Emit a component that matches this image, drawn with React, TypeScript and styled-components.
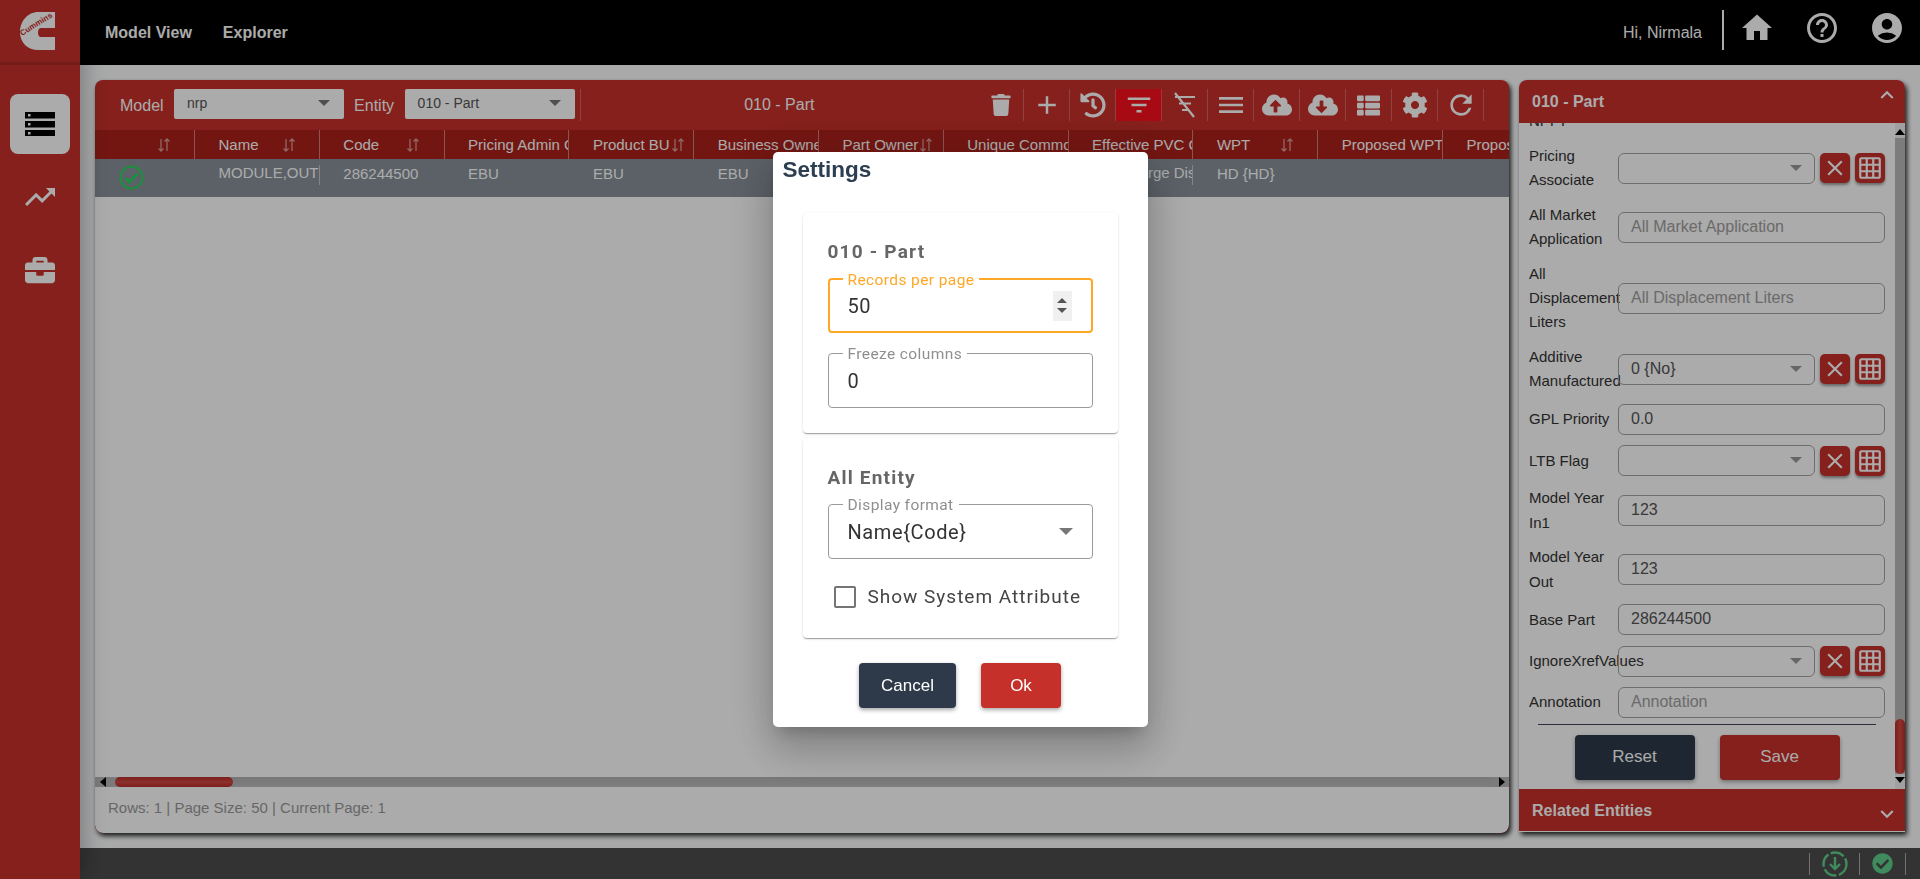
import React from "react";
import styled, { createGlobalStyle } from "styled-components";
import { MdHome, MdHelpOutline, MdAccountCircle, MdTrendingUp, MdAdd, MdFilterList, MdMenu, MdRefresh, MdClose, MdGridOn, MdKeyboardArrowUp, MdKeyboardArrowDown } from "react-icons/md";
import { FaBriefcase, FaTrash, FaHistory, FaCloudUploadAlt, FaCloudDownloadAlt, FaThList, FaCog, FaCheckCircle } from "react-icons/fa";

const GlobalStyle = createGlobalStyle`
  html, body { margin: 0; padding: 0; height: 100%; overflow: hidden; }
  body { font-family: "Liberation Sans", Arial, sans-serif; background: #fcfdfe; }
  * { box-sizing: border-box; }
`;

const RED = "#c6302a";

const Shell = styled.div`
  display: flex;
  width: 1920px;
  height: 879px;
`;

const Sidebar = styled.aside`
  width: 80px;
  flex: none;
  background: ${RED};
  box-shadow: 4px 0 22px rgba(0, 0, 0, 0.28);
  z-index: 2;
  display: flex;
  flex-direction: column;
  align-items: center;
`;

const LogoCell = styled.div`
  width: 100%;
  height: 65px;
  flex: none;
  border-bottom: 3px solid #ac2a25;
  display: flex;
  align-items: flex-start;
  padding: 12px 0 0 20px;
`;

const NavButton = styled.div<{ $active?: boolean; $height: number }>`
  width: 60px;
  height: ${(p) => p.$height}px;
  border-radius: 8px;
  background: ${(p) => (p.$active ? "#fff" : "transparent")};
  color: #fff;
  display: flex;
  align-items: center;
  justify-content: center;
`;

const NavList = styled.nav`
  display: flex;
  flex-direction: column;
  align-items: center;
  gap: 13px;
  padding-top: 29px;
`;

const Main = styled.div`
  flex: 1;
  min-width: 0;
  display: flex;
  flex-direction: column;
`;

const TopBar = styled.header`
  height: 65px;
  flex: none;
  background: #000;
  color: #fff;
  display: flex;
  align-items: center;
  padding: 0 0 0 25px;
`;

const TopLink = styled.span`
  font-size: 16px;
  font-weight: 700;
  margin-right: 31px;
`;

const TopRight = styled.div`
  margin-left: auto;
  display: flex;
  align-items: center;
  padding-right: 15px;
  height: 100%;
`;

const Hello = styled.span`
  font-size: 16px;
  margin-right: 20px;
`;

const TopDivider = styled.span`
  width: 2px;
  height: 40px;
  background: #fff;
  margin: 0 15px 5px 0;
`;

const TopIcon = styled.span`
  width: 36px;
  height: 36px;
  margin: 0 29px 10px 0;
  display: flex;
  &:last-child { margin-right: 0; }
`;

const Content = styled.main`
  flex: 1;
  min-height: 0;
  display: flex;
  gap: 10px;
  padding: 15px 15px 15px 15px;
`;

const GridPanel = styled.section`
  width: 1414px;
  flex: none;
  background: ${RED};
  border-radius: 8px;
  box-shadow: 2px 3px 5px rgba(0, 0, 0, 0.85);
  display: flex;
  flex-direction: column;
  overflow: hidden;
`;

const Toolbar = styled.div`
  height: 50px;
  flex: none;
  display: flex;
  align-items: center;
  padding-left: 25px;
  color: #fff;
`;

const ToolLabel = styled.span`
  font-size: 16px;
  margin-right: 10.5px;
  margin-top: 1px;
`;

const ToolSelect = styled.div`
  width: 170px;
  height: 30px;
  background: #fff;
  border-radius: 2px;
  color: #555;
  font-size: 14px;
  display: flex;
  align-items: center;
  justify-content: space-between;
  padding: 0 14px 2px 13px;
  margin: 0 10px 2px 0;
`;

const Caret = styled.i<{ $size?: number; $color?: string }>`
  display: block;
  flex: none;
  width: 0;
  height: 0;
  margin-left: auto;
  border-left: ${(p) => p.$size ?? 6}px solid transparent;
  border-right: ${(p) => p.$size ?? 6}px solid transparent;
  border-top: ${(p) => p.$size ?? 6}px solid ${(p) => p.$color ?? "#777"};
`;

const ToolTitle = styled.div`
  flex: 1;
  text-align: center;
  font-size: 16px;
  border-left: 1px solid rgba(255, 255, 255, 0.25);
  height: 32px;
  line-height: 32px;
  margin-left: -5px;
  padding-right: 0;
`;

const ToolIcons = styled.div`
  display: flex;
  margin-right: 25px;
`;

const ToolIcon = styled.span<{ $on?: boolean }>`
  width: 46px;
  height: 32px;
  border-right: 1px solid rgba(255, 255, 255, 0.25);
  background: ${(p) => (p.$on ? "#fa0f1c" : "transparent")};
  display: flex;
  align-items: center;
  justify-content: center;
  color: #fff;
`;

const HeaderRow = styled.div`
  height: 29px;
  flex: none;
  background: #ac211b;
  display: flex;
  color: #fff;
  font-size: 15px;
  overflow: hidden;
`;

const DataRow = styled.div`
  height: 38px;
  flex: none;
  background: #88919a;
  display: flex;
  color: #fff;
  font-size: 15px;
  overflow: hidden;
`;

const HeadCell = styled.div<{ $first?: boolean }>`
  width: ${(p) => (p.$first ? 100 : 124.8)}px;
  flex: none;
  border-right: 1px solid rgba(255, 255, 255, 0.42);
  padding-left: ${(p) => (p.$first ? 61 : 23.5)}px;
  display: flex;
  align-items: center;
  white-space: nowrap;
  overflow: hidden;
`;

const HeadText = styled.span`
  min-width: 62px;
  flex: none;
`;

const BodyCell = styled.div<{ $first?: boolean; $line?: boolean }>`
  width: ${(p) => (p.$first ? 100 : 124.8)}px;
  flex: none;
  padding: ${(p) => (p.$first ? "6px 0 0 24px" : "5px 0 0 23.5px")};
  border-right: ${(p) => (p.$line ? "1px solid rgba(255,255,255,.5)" : "1px solid transparent")};
  height: ${(p) => (p.$line ? "20px" : "auto")};
  margin-top: ${(p) => (p.$line ? "6px" : "0")};
  white-space: nowrap;
  overflow: hidden;
  line-height: ${(p) => (p.$line ? "15px" : "19px")};
  ${(p) => p.$line && "padding-top: 0;"}
`;

const GridBody = styled.div`
  flex: 1;
  background: #fff;
`;

const HScroll = styled.div`
  height: 10px;
  flex: none;
  background: #b8b8b8;
  display: flex;
  align-items: center;
`;

const HArrow = styled.span<{ $dir: "left" | "right" }>`
  width: 0;
  height: 0;
  flex: none;
  border-top: 5px solid transparent;
  border-bottom: 5px solid transparent;
  ${(p) => (p.$dir === "left"
    ? "border-right: 6px solid #000; margin: 0 9px 0 5px;"
    : "border-left: 6px solid #000; margin: 0 4px 0 8px;")}
`;

const HTrack = styled.div`
  flex: 1;
  height: 10px;
  background: #b9b9b9;
  border-radius: 5px;
  background-image: linear-gradient(#b2b2b2, #bdbdbd);
`;

const HThumb = styled.div`
  width: 118px;
  height: 10px;
  border-radius: 5px;
  background: ${RED};
  background-image: linear-gradient(#bb2d28, #d04a45 50%, #bb2d28);
`;

const GridFooter = styled.div`
  height: 46px;
  flex: none;
  background: #fff;
  color: #9a9a9a;
  font-size: 15px;
  padding: 12px 0 0 13px;
  border-radius: 0 0 8px 8px;
`;

const SidePanel = styled.section`
  flex: 1;
  min-width: 0;
  height: 752px;
  background: #fff;
  border-radius: 8px 8px 0 0;
  box-shadow: 2px 3px 5px rgba(0, 0, 0, 0.85);
  display: flex;
  flex-direction: column;
  overflow: hidden;
`;

const SideHeader = styled.div<{ $bottom?: boolean }>`
  height: 43px;
  flex: none;
  background: ${RED};
  color: #fff;
  font-size: 16px;
  font-weight: 700;
  display: flex;
  align-items: ${(p) => (p.$bottom ? "flex-end" : "flex-start")};
  justify-content: space-between;
  padding: ${(p) => (p.$bottom ? "0 5px 4px 13px" : "2px 5px 0 13px")};
  line-height: 30px;
  ${(p) => p.$bottom && "border-bottom: 1px solid #fff;"}
`;

const SideHeaderText = styled.span<{ $bottom?: boolean }>`
  align-self: flex-start;
  margin-top: ${(p) => (p.$bottom ? 7 : 5)}px;
`;

const SideBody = styled.div`
  flex: 1;
  min-height: 0;
  display: flex;
`;

const FormColumn = styled.div`
  flex: 1;
  min-width: 0;
  overflow: hidden;
  padding: 0 10px;
`;

const FormList = styled.div`
  display: flex;
  flex-direction: column;
  gap: 10.3px;
  margin-top: -13.6px;
`;

const FormRow = styled.div`
  display: flex;
  align-items: center;
`;

const FieldLabel = styled.label`
  width: 89px;
  flex: none;
  font-size: 15px;
  line-height: 24.3px;
  color: #333;
`;

const Field = styled.div<{ $muted?: boolean }>`
  flex: 1;
  min-width: 0;
  height: 31px;
  border: 1px solid #a4a4a4;
  border-radius: 6px;
  color: ${(p) => (p.$muted ? "#9e9e9e" : "#555")};
  font-size: 16px;
  display: flex;
  align-items: center;
  justify-content: space-between;
  padding: 0 12px 1px;
`;

const SquareButton = styled.span`
  width: 30px;
  height: 30px;
  flex: none;
  margin-left: 5px;
  background: ${RED};
  border-radius: 5px;
  color: #fff;
  display: flex;
  align-items: center;
  justify-content: center;
  box-shadow: 0 2px 3px rgba(0, 0, 0, 0.4);
`;

const Rule = styled.hr`
  margin: 6px 9px 10px;
  border: 0;
  border-top: 1px solid #445;
`;

const ActionRow = styled.div<{ $gap: number }>`
  display: flex;
  justify-content: center;
  gap: ${(p) => p.$gap}px;
`;

const Action = styled.button<{ $tone: "dark" | "red"; $width: number }>`
  width: ${(p) => p.$width}px;
  height: 45px;
  border: 0;
  border-radius: 4px;
  background: ${(p) => (p.$tone === "dark" ? "#2e3a49" : RED)};
  color: #fff;
  font-family: "Liberation Sans", Arial, sans-serif;
  font-size: 17px;
  box-shadow: 0 2px 4px rgba(0, 0, 0, 0.35);
`;

const VScroll = styled.div`
  width: 10px;
  flex: none;
  display: flex;
  flex-direction: column;
  align-items: center;
  background: #f0f0f0;
`;

const VArrow = styled.span<{ $dir: "up" | "down" }>`
  width: 0;
  height: 0;
  flex: none;
  border-left: 5px solid transparent;
  border-right: 5px solid transparent;
  ${(p) => (p.$dir === "up"
    ? "border-bottom: 6px solid #000; margin: 6px 0 3px;"
    : "border-top: 6px solid #000; margin: 3px 0 6px;")}
`;

const VTrack = styled.div`
  flex: 1;
  width: 10px;
  background: #b9b9b9;
  display: flex;
  flex-direction: column;
  justify-content: flex-end;
`;

const VThumb = styled.div`
  height: 55px;
  border-radius: 5px;
  background-image: linear-gradient(90deg, #bb2d28, #d04a45 50%, #bb2d28);
`;

const StatusBar = styled.footer`
  height: 31px;
  flex: none;
  background: #4d4d4d;
  display: flex;
  align-items: center;
  justify-content: flex-end;
  padding-right: 14px;
  color: #5fcf8b;
`;

const StatusCell = styled.span<{ $width: number }>`
  width: ${(p) => p.$width}px;
  height: 22px;
  border-left: 1px solid #aaa;
  display: flex;
  align-items: center;
  justify-content: center;
  &:last-child { width: 1px; }
`;

const Backdrop = styled.div`
  position: fixed;
  inset: 0;
  background: rgba(0, 0, 0, 0.33);
  z-index: 5;
  display: flex;
  align-items: center;
  justify-content: center;
`;

const Modal = styled.div`
  width: 375px;
  height: 575px;
  background: #fff;
  border-radius: 5px;
  box-shadow: 0 11px 15px -7px rgba(0, 0, 0, 0.2), 0 24px 38px 3px rgba(0, 0, 0, 0.14), 0 9px 46px 8px rgba(0, 0, 0, 0.12);
  padding: 3px 30px 0;
  display: flex;
  flex-direction: column;
`;

const ModalTitle = styled.h2`
  margin: 0 0 28px -20px;
  font-size: 22.5px;
  line-height: 30px;
  font-weight: 700;
  color: #2c3e50;
`;

const Card = styled.div<{ $height: number }>`
  height: ${(p) => p.$height}px;
  flex: none;
  margin-bottom: 5px;
  background: #fff;
  border-radius: 4px;
  padding: 0 25px;
  box-shadow: 0 2px 1px -1px rgba(0, 0, 0, 0.2), 0 1px 1px rgba(0, 0, 0, 0.14), 0 1px 3px rgba(0, 0, 0, 0.12);
`;

const CardTitle = styled.h3<{ $top: number }>`
  margin: 0 0 14px;
  padding-top: ${(p) => p.$top}px;
  font-family: Roboto, sans-serif;
  font-size: 19px;
  line-height: 24px;
  font-weight: 700;
  letter-spacing: 1.2px;
  color: #666;
`;

const Outlined = styled.div<{ $focus?: boolean }>`
  position: relative;
  height: 55px;
  margin-bottom: 20px;
  border: ${(p) => (p.$focus ? "2px solid #ffa726" : "1px solid #9a9a9a")};
  border-radius: 4px;
  padding: 0 ${(p) => (p.$focus ? 18 : 19)}px;
  display: flex;
  align-items: center;
  justify-content: space-between;
  font-family: Roboto, sans-serif;
  font-size: 20px;
  letter-spacing: 0.6px;
  color: #333;
`;

const Notch = styled.span<{ $focus?: boolean }>`
  position: absolute;
  top: -8px;
  left: ${(p) => (p.$focus ? 13 : 14)}px;
  background: #fff;
  padding: 0 5px;
  font-size: 15.5px;
  line-height: 16px;
  letter-spacing: 0.4px;
  color: ${(p) => (p.$focus ? "#ffa726" : "#8f8f8f")};
`;

const Spinner = styled.span`
  width: 19px;
  height: 30px;
  margin-right: 1px;
  background: #f0f0f0;
  display: flex;
  flex-direction: column;
  align-items: center;
  justify-content: center;
  gap: 5px;
`;

const SpinUp = styled.i`
  display: block;
  border-left: 5px solid transparent;
  border-right: 5px solid transparent;
  border-bottom: 5px solid #555;
`;

const SpinDown = styled.i`
  display: block;
  border-left: 5px solid transparent;
  border-right: 5px solid transparent;
  border-top: 5px solid #555;
`;

const CheckRow = styled.div`
  display: flex;
  align-items: center;
  gap: 12px;
  padding-left: 6px;
  margin-top: 26px;
  font-family: Roboto, sans-serif;
  font-size: 19px;
  letter-spacing: 1px;
  color: #444;
`;

const CheckBox = styled.span`
  width: 22px;
  height: 22px;
  border: 2px solid #757575;
  border-radius: 2px;
`;

const ModalActions = styled(ActionRow)`
  margin-top: 20px;
`;

const SortIcon = () => (
  <svg width="14" height="16" viewBox="0 0 14 16" fill="none" stroke="#fff" strokeOpacity="0.55" strokeWidth="1.3" style={{ flex: "none", marginLeft: 1 }}>
    <path d="M4 2v12M1.5 11.500 4 14l2.500-2.500M10 14V2M7.500 4.500 10 2l2.500 2.500" />
  </svg>
);

const CumminsLogo = () => (
  <svg width="37" height="39" viewBox="0 0 37 39">
    <path fill="#fff" d="M35 0H18C8 0 0 9 0 20c0 11 8 18 18 18h17V25H21c-2 0-3-2-3-4.500S19 16 21 16h14z" />
    <text x="2" y="24" transform="rotate(-32 2 24)" fill={RED} stroke="#fff" strokeWidth="1.2" paintOrder="stroke" fontFamily="Liberation Sans" fontSize="8" fontWeight="700">
      Cummins
    </text>
  </svg>
);

const ServerBars = () => (
  <svg width="30" height="24" viewBox="0 0 30 24">
    {[0, 9, 18].map((y) => (
      <g key={y}>
        <rect x="0" y={y} width="30" height="6.500" fill="#000" />
        <rect x="3" y={y + 2} width="2.500" height="2.500" fill="#fff" />
      </g>
    ))}
  </svg>
);

const FilterOff = () => (
  <svg width="30" height="30" viewBox="0 0 30 30" fill="none" stroke="#fff" strokeWidth="2.200">
    <path d="M5 7h20M9 13.500h12M12 20h6M5 3l19 24" />
  </svg>
);

const DashedDownload = () => (
  <svg width="26" height="26" viewBox="0 0 26 26" fill="none" stroke="#5fcf8b" strokeWidth="2.400">
    <circle cx="13" cy="13" r="11.500" strokeDasharray="14 2.500" />
    <path d="M13 6v12M8 13l5 5 5-5" />
  </svg>
);

const CheckCircleOutline = () => (
  <svg width="25" height="25" viewBox="0 0 25 25" fill="none" stroke="#2bd65f" strokeWidth="2">
    <circle cx="12.500" cy="12.500" r="11" />
    <path strokeWidth="3" d="M6.500 13l4 4 8-8.500" />
  </svg>
);

const columns = [
  { name: "Name", sort: true },
  { name: "Code", sort: true },
  { name: "Pricing Admin Group" },
  { name: "Product BU", sort: true },
  { name: "Business Owner" },
  { name: "Part Owner", sort: true },
  { name: "Unique Common" },
  { name: "Effective PVC Class" },
  { name: "WPT", sort: true },
  { name: "Proposed WPT" },
  { name: "Proposed Class" },
];

const rowCells = ["MODULE,OUTPUT", "286244500", "EBU", "EBU", "EBU", "", "", "Extra Large Displacement", "HD {HD}", "", ""];

type FieldRow = { label: string; value?: string; hint?: string; select?: boolean };

const fields: FieldRow[] = [
  { label: "Pricing Associate", select: true },
  { label: "All Market Application", hint: "All Market Application" },
  { label: "All Displacement Liters", hint: "All Displacement Liters" },
  { label: "Additive Manufactured", select: true, value: "0 {No}" },
  { label: "GPL Priority", value: "0.0" },
  { label: "LTB Flag", select: true },
  { label: "Model Year In1", value: "123" },
  { label: "Model Year Out", value: "123" },
  { label: "Base Part", value: "286244500" },
  { label: "IgnoreXrefValues", select: true },
  { label: "Annotation", hint: "Annotation" },
];

const App = () => (
  <>
    <GlobalStyle />
    <Shell>
      <Sidebar>
        <LogoCell>
          <CumminsLogo />
        </LogoCell>
        <NavList>
          <NavButton $active $height={60}>
            <ServerBars />
          </NavButton>
          <NavButton $height={60}>
            <MdTrendingUp size={36} />
          </NavButton>
          <NavButton $height={60}>
            <FaBriefcase size={30} />
          </NavButton>
        </NavList>
      </Sidebar>
      <Main>
        <TopBar>
          <TopLink>Model View</TopLink>
          <TopLink>Explorer</TopLink>
          <TopRight>
            <Hello>Hi, Nirmala</Hello>
            <TopDivider />
            <TopIcon><MdHome size={36} /></TopIcon>
            <TopIcon><MdHelpOutline size={36} /></TopIcon>
            <TopIcon><MdAccountCircle size={36} /></TopIcon>
          </TopRight>
        </TopBar>
        <Content>
          <GridPanel>
            <Toolbar>
              <ToolLabel>Model</ToolLabel>
              <ToolSelect>nrp<Caret /></ToolSelect>
              <ToolLabel>Entity</ToolLabel>
              <ToolSelect>010 - Part<Caret /></ToolSelect>
              <ToolTitle>010 - Part</ToolTitle>
              <ToolIcons>
                <ToolIcon><FaTrash size={22} /></ToolIcon>
                <ToolIcon><MdAdd size={30} /></ToolIcon>
                <ToolIcon><FaHistory size={26} /></ToolIcon>
                <ToolIcon $on><MdFilterList size={30} /></ToolIcon>
                <ToolIcon><FilterOff /></ToolIcon>
                <ToolIcon><MdMenu size={32} /></ToolIcon>
                <ToolIcon><FaCloudUploadAlt size={30} /></ToolIcon>
                <ToolIcon><FaCloudDownloadAlt size={30} /></ToolIcon>
                <ToolIcon><FaThList size={23} /></ToolIcon>
                <ToolIcon><FaCog size={26} /></ToolIcon>
                <ToolIcon><MdRefresh size={32} /></ToolIcon>
              </ToolIcons>
            </Toolbar>
            <HeaderRow>
              <HeadCell $first><SortIcon /></HeadCell>
              {columns.map((c) => (
                <HeadCell key={c.name}>
                  <HeadText>{c.name}</HeadText>
                  {c.sort && <SortIcon />}
                </HeadCell>
              ))}
            </HeaderRow>
            <DataRow>
              <BodyCell $first>
                <CheckCircleOutline />
              </BodyCell>
              {rowCells.map((v, i) => (
                <BodyCell key={i} $line={i === 0 || i === 7}>{v}</BodyCell>
              ))}
            </DataRow>
            <GridBody />
            <HScroll>
              <HArrow $dir="left" />
              <HTrack><HThumb /></HTrack>
              <HArrow $dir="right" />
            </HScroll>
            <GridFooter>Rows: 1 | Page Size: 50 | Current Page: 1</GridFooter>
          </GridPanel>
          <SidePanel>
            <SideHeader>
              <SideHeaderText>010 - Part</SideHeaderText>
              <MdKeyboardArrowUp size={26} />
            </SideHeader>
            <SideBody>
              <FormColumn>
                <FormList>
                  <FormRow><FieldLabel>NPI Y</FieldLabel></FormRow>
                  {fields.map((f) => (
                    <FormRow key={f.label}>
                      <FieldLabel>{f.label}</FieldLabel>
                      <Field $muted={!!f.hint}>
                        {f.hint ?? f.value}
                        {f.select && <Caret $color="#999" />}
                      </Field>
                      {f.select && (
                        <>
                          <SquareButton><MdClose size={26} /></SquareButton>
                          <SquareButton><MdGridOn size={26} /></SquareButton>
                        </>
                      )}
                    </FormRow>
                  ))}
                </FormList>
                <Rule />
                <ActionRow $gap={25}>
                  <Action $tone="dark" $width={120}>Reset</Action>
                  <Action $tone="red" $width={120}>Save</Action>
                </ActionRow>
              </FormColumn>
              <VScroll>
                <VArrow $dir="up" />
                <VTrack><VThumb /></VTrack>
                <VArrow $dir="down" />
              </VScroll>
            </SideBody>
            <SideHeader $bottom>
              <SideHeaderText $bottom>Related Entities</SideHeaderText>
              <MdKeyboardArrowDown size={26} />
            </SideHeader>
          </SidePanel>
        </Content>
        <StatusBar>
          <StatusCell $width={50}><DashedDownload /></StatusCell>
          <StatusCell $width={46}><FaCheckCircle size={21} /></StatusCell>
          <StatusCell $width={1} />
        </StatusBar>
      </Main>
    </Shell>
    <Backdrop>
      <Modal>
        <ModalTitle>Settings</ModalTitle>
        <Card $height={220}>
          <CardTitle $top={27}>010 - Part</CardTitle>
          <Outlined $focus>
            <Notch $focus>Records per page</Notch>
            50
            <Spinner><SpinUp /><SpinDown /></Spinner>
          </Outlined>
          <Outlined>
            <Notch>Freeze columns</Notch>
            0
          </Outlined>
        </Card>
        <Card $height={200}>
          <CardTitle $top={28}>All Entity</CardTitle>
          <Outlined>
            <Notch>Display format</Notch>
            Name{"{Code}"}
            <Caret $size={7} $color="#777" />
          </Outlined>
          <CheckRow><CheckBox />Show System Attribute</CheckRow>
        </Card>
        <ModalActions $gap={25}>
          <Action $tone="dark" $width={97}>Cancel</Action>
          <Action $tone="red" $width={80}>Ok</Action>
        </ModalActions>
      </Modal>
    </Backdrop>
  </>
);

export default App;
